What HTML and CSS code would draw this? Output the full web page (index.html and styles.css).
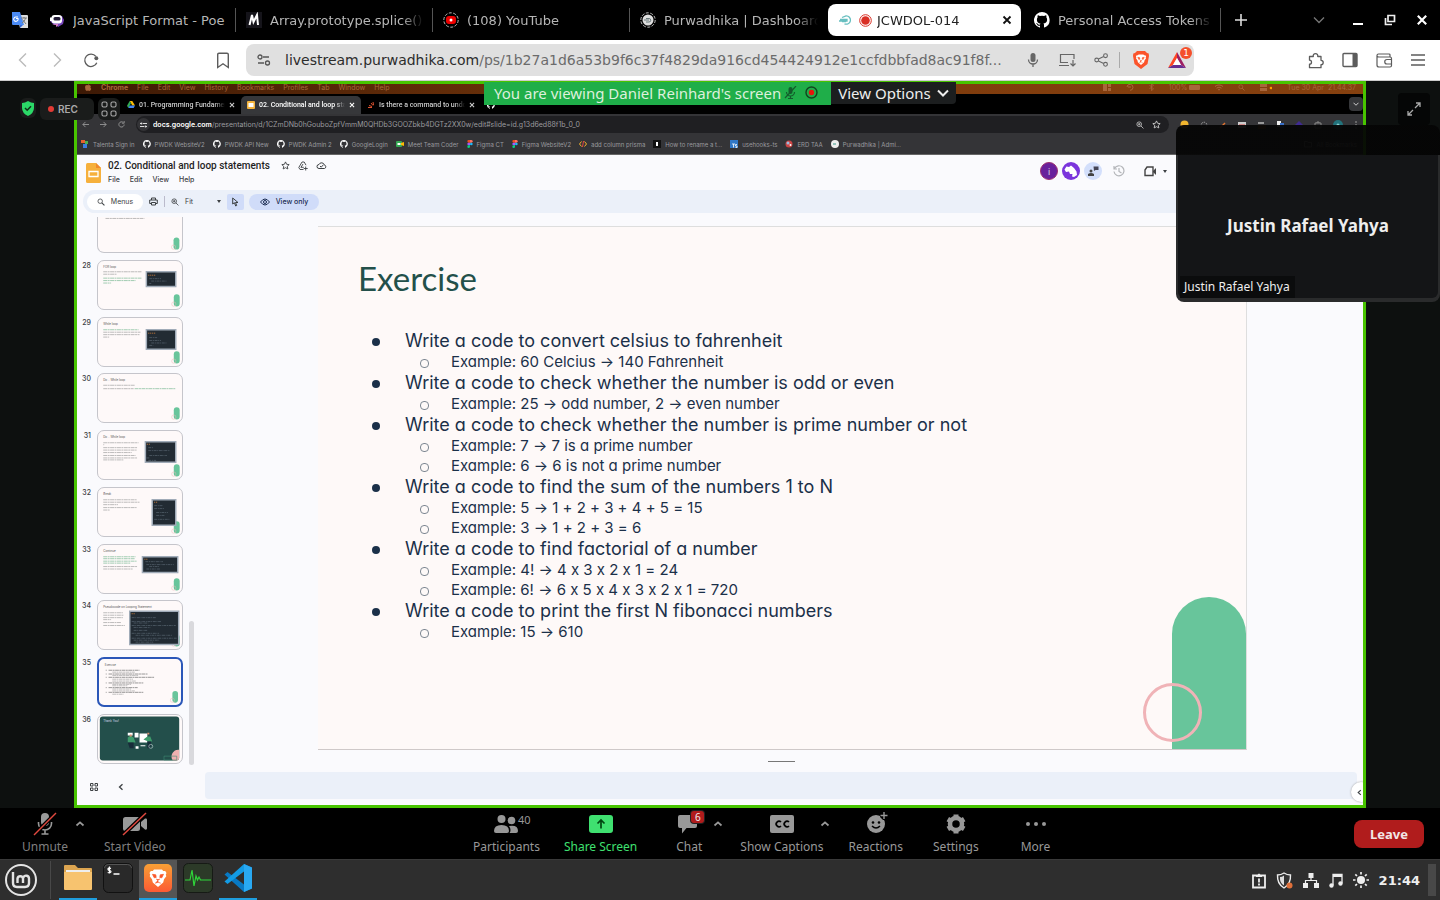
FILE: index.html
```html
<!DOCTYPE html>
<html lang="en">
<head>
<meta charset="utf-8">
<title>JCWDOL-014</title>
<link rel="stylesheet" href="styles.css">
</head>
<body>
<svg class="defs" aria-hidden="true">
  <symbol id="github" viewBox="0 0 16 16"><path fill="currentColor" d="M8 0a8 8 0 0 0-2.5 15.6c.4 0 .5-.2.5-.4v-1.500c-2.200.5-2.700-1-2.700-1-.4-.9-.9-1.200-.9-1.200-.7-.5.1-.5.1-.5.8.1 1.200.8 1.200.8.7 1.300 1.900.9 2.300.7.1-.5.3-.9.5-1.100-1.800-.2-3.600-.9-3.600-4 0-.9.3-1.600.8-2.100-.1-.2-.4-1 .1-2.100 0 0 .7-.2 2.200.8a7.600 7.600 0 0 1 4 0c1.500-1 2.200-.8 2.200-.8.4 1.100.2 1.900.1 2.100.5.6.8 1.300.8 2.100 0 3.100-1.900 3.700-3.700 3.900.3.3.6.8.6 1.500v2.200c0 .2.100.5.6.4A8 8 0 0 0 8 0z"/></symbol>
  <symbol id="x" viewBox="0 0 10 10"><path d="M1.500 1.500l7 7M8.500 1.500l-7 7" stroke="currentColor" stroke-width="1.800" fill="none"/></symbol>
  <symbol id="up" viewBox="0 0 10 10"><path d="M1.500 6.500L5 3.300l3.500 3.200" stroke="currentColor" stroke-width="1.700" fill="none"/></symbol>
  <symbol id="down" viewBox="0 0 12 12"><path d="M1 3.500l5 5 5-5" stroke="currentColor" stroke-width="2" fill="none"/></symbol>
  <symbol id="left" viewBox="0 0 16 16"><path d="M11 1.500L4.500 8l6.500 6.500" stroke="currentColor" stroke-width="1.400" fill="none"/></symbol>
  <symbol id="leftbold" viewBox="0 0 16 16"><path d="M11 2.500L5 8l6 5.500" stroke="currentColor" stroke-width="2.600" fill="none"/></symbol>
  <symbol id="right" viewBox="0 0 16 16"><path d="M5 1.500L11.500 8 5 14.500" stroke="currentColor" stroke-width="1.400" fill="none"/></symbol>
  <symbol id="search" viewBox="0 0 10 10"><g fill="none" stroke="currentColor"><circle cx="4" cy="4" r="2.800"/><path d="M6 6l3.300 3.300" stroke-width="1.300"/></g></symbol>
  <symbol id="zoomin" viewBox="0 0 10 10"><g fill="none" stroke="currentColor"><circle cx="4" cy="4" r="2.900"/><path d="M6 6l3.300 3.300M2.500 4h3M4 2.500v3"/></g></symbol>
  <symbol id="star" viewBox="0 0 12 12"><path d="M6 1.200l1.500 3.200 3.400.4-2.500 2.300.7 3.500L6 8.900l-3.100 1.700.7-3.500L1.100 4.800l3.400-.4z" stroke="currentColor" stroke-width="1.200" fill="none"/></symbol>
  <symbol id="figma" viewBox="0 0 6 9"><path fill="#f24e1e" d="M0 1.500A1.500 1.500 0 0 1 1.500 0H3v3H1.500A1.500 1.500 0 0 1 0 1.500z"/><path fill="#ff7262" d="M3 0h1.500a1.500 1.500 0 0 1 0 3H3z"/><path fill="#a259ff" d="M0 4.500A1.500 1.500 0 0 1 1.500 3H3v3H1.500A1.500 1.500 0 0 1 0 4.500z"/><circle cx="4.500" cy="4.500" r="1.500" fill="#1abcfe"/><path fill="#0acf83" d="M0 7.500A1.500 1.500 0 0 1 1.500 6H3v1.500a1.500 1.500 0 0 1-3 0z"/></symbol>
  <symbol id="lion" viewBox="0 0 20 20"><path fill="#fff" d="M6 1.500h8l1.200 1.600 2-.2 1.300 2-.7 1.600.5 1.800-2.300 3-.8 3.200L10 19l-5.200-4.500L4 11.300l-2.300-3 .5-1.800-.7-1.600 1.300-2 2 .2z"/><path d="M4.500 6.300l3.300.5.4 2.700-2 .3zM15.500 6.300l-3.300.5-.4 2.700 2 .3zM8 11l2 .8 2-.8M10 11.800v2.400l-2.800 1M10 14.200l2.800 1" fill="#f9572a" stroke="#f9572a" stroke-width=".7"/></symbol>
  <symbol id="corner" viewBox="0 0 10 15"><rect x="3" y="1" width="6" height="12.500" rx="3" fill="#68c59b"/><circle cx="3" cy="11" r="2.200" fill="none" stroke="#eeb9b9" stroke-width=".5"/></symbol>
</svg>

<header class="tabs">
  <button class="pinned" aria-label="Translate"><svg width="18" height="18" viewBox="0 0 18 18"><path d="M6 4h10a1 1 0 0 1 1 1v12H9z" fill="#ddd"/><path d="M1 1h8l4 13H2a1 1 0 0 1-1-1z" fill="#4a8af4"/><path d="M7 6H4.800A2.200 2.200 0 1 0 7 7.500H5" fill="none" stroke="#fff" stroke-width="1.100"/><path d="M10 7h6M13 6v1M11 12c2-1 3-3 3.500-5M11.500 8.500L15 13" stroke="#777" fill="none"/><path d="M9 14h3l-3 3z" fill="#3367d6"/></svg></button>
  <nav class="tablist">
    <a class="tab" href="#"><svg width="16" height="16" viewBox="0 0 16 16"><path d="M4 4h9l2 4-1 4-5 3-2-2H5L1 9z" fill="#7544bb"/><path d="M3 12h6v1.500l-2 1.500v-2z" fill="#d57cbd"/><rect x="2.500" y="3" width="10.500" height="8.500" rx="3" fill="#fff"/><rect x="4.500" y="5" width="7" height="3.500" rx="1.500" fill="#221b35"/><path d="M1 5.500h2v3.500H1z" fill="#fff"/></svg><span>JavaScript Format - Poe</span></a>
    <a class="tab" href="#"><svg width="16" height="16" viewBox="0 0 16 16"><path fill="#15141a" d="M0 0h16v16H0z"/><path d="M3.500 13L6 3l1.500 7L11 3l1 10" fill="none" stroke="#fff" stroke-width="2"/></svg><span>Array.prototype.splice()</span></a>
    <a class="tab" href="#"><svg width="16" height="16" viewBox="0 0 16 16"><circle cx="8" cy="8" r="7.200" fill="none" stroke="#bbb" stroke-dasharray="3 1.500"/><rect x="3" y="4" width="10" height="8" rx="3" fill="#e00"/><circle cx="8" cy="8" r="1.500" fill="#fff"/></svg><span>(108) YouTube</span></a>
    <a class="tab" href="#"><svg width="16" height="16" viewBox="0 0 16 16"><circle cx="8" cy="8" r="7.200" fill="none" stroke="#bbb" stroke-dasharray="3 1.500"/><circle cx="8" cy="8" r="5.500" fill="#ddd"/><path d="M4 8h5M6 6.500h3a1.500 1.500 0 0 1 0 3.500H6" stroke="#6a7a7c" fill="none"/></svg><span>Purwadhika | Dashboard</span></a>
    <a class="tab current" href="#"><svg width="13" height="12" viewBox="0 0 13 12"><path d="M3 3.500L7 1.800a4.200 4.200 0 1 1-1.500 8M1 5.500h7v1.500H0M3 7.500h4" stroke="#67bfc0" stroke-width="1.300" fill="none"/></svg><svg width="13" height="13" viewBox="0 0 13 13"><circle cx="6.500" cy="6.500" r="5.800" fill="none" stroke="#d93025"/><circle cx="6.500" cy="6.500" r="4.300" fill="#d93025"/></svg><span>JCWDOL-014</span><svg class="tabx" width="10" height="10"><use href="#x"/></svg></a>
    <a class="tab" href="#"><svg class="white" width="16" height="16"><use href="#github"/></svg><span>Personal Access Tokens</span></a>
  </nav>
  <div class="winctl">
    <button aria-label="New tab"><svg width="12" height="12" viewBox="0 0 12 12"><path d="M6 0v12M0 6h12" stroke="#ddd" stroke-width="1.600"/></svg></button>
    <button class="tabmenu" aria-label="Search tabs"><svg width="12" height="12" viewBox="0 0 12 12"><path d="M1 3.500l5 5 5-5" stroke="#777" stroke-width="1.300" fill="none"/></svg></button>
    <button aria-label="Minimise"><svg width="12" height="12" viewBox="0 0 12 12"><path d="M1 10h10" stroke="#fff" stroke-width="2"/></svg></button>
    <button aria-label="Restore"><svg width="12" height="12" viewBox="0 0 12 12"><path d="M4 1.500h6.500v6H4zM1.500 4v6.500H8" fill="none" stroke="#eee" stroke-width="1.700"/></svg></button>
    <button aria-label="Close"><svg class="white" width="12" height="12"><use href="#x"/></svg></button>
  </div>
</header>

<div class="toolbar">
  <div class="navbtns">
    <button class="off" aria-label="Back"><svg width="16" height="16"><use href="#left"/></svg></button>
    <button class="off" aria-label="Forward"><svg width="16" height="16"><use href="#right"/></svg></button>
    <button aria-label="Reload"><svg width="16" height="16" viewBox="0 0 18 18"><path d="M14.500 5A7 7 0 1 0 15.500 12" stroke="currentColor" stroke-width="1.500" fill="none"/><circle cx="15" cy="7" r="2.200" fill="currentColor"/></svg></button>
    <button class="mark" aria-label="Bookmark"><svg width="14" height="17" viewBox="0 0 14 17"><path d="M1.700 2.500q0-1.300 1.300-1.300h8q1.300 0 1.300 1.300v13L7 11.800 1.700 15.500z" stroke="currentColor" stroke-width="1.400" fill="none"/></svg></button>
  </div>
  <div class="omnibox">
    <svg width="14" height="14" viewBox="0 0 14 14"><g fill="none" stroke="#555" stroke-width="1.300"><circle cx="3" cy="4" r="2"/><path d="M6 4h6M1 10h6"/><circle cx="10.500" cy="10" r="2"/></g></svg>
    <div class="url" role="textbox" aria-label="Address">livestream.purwadhika.com<span>/ps/1b27a1d6a53b9f6c37f4829da916cd454424912e1ccfdbbfad8ac91f8f...</span></div>
    <button aria-label="Microphone"><svg width="14" height="16" viewBox="0 0 14 16"><rect x="4.500" y="1" width="5" height="9" rx="2.500" fill="#666"/><path d="M2.500 7.500a4.500 4.500 0 0 0 9 0M7 12v3" fill="none" stroke="#666" stroke-width="1.300"/></svg></button>
    <button aria-label="Install"><svg width="18" height="14" viewBox="0 0 18 14"><path d="M16 6V1.500H2.500v8H10M1 12.500h10M15 7v6M12.500 10.500L15 13l2.500-2.500" fill="none" stroke="#666" stroke-width="1.200"/></svg></button>
    <button aria-label="Share"><svg width="15" height="14" viewBox="0 0 15 14"><g fill="none" stroke="#666" stroke-width="1.100"><circle cx="2.700" cy="7" r="1.900"/><circle cx="11.500" cy="2.700" r="1.900"/><circle cx="11.500" cy="11.300" r="1.900"/><path d="M4.500 6L9.700 3.500M4.500 8l5.200 2.500"/></g></svg></button>
    <i class="vline"></i>
    <button aria-label="Brave Shields"><svg width="18" height="20" viewBox="0 0 18 20"><path d="M5 1h8l2 2 1.700.5L17 6l-1.500 8L9 19l-6.500-5L1 6l.3-2.500L3 3z" fill="#fb542b"/><svg x="3" y="3" width="12" height="13"><use href="#lion"/></svg></svg></button>
    <button class="rewards" aria-label="Rewards"><svg width="20" height="17" viewBox="0 0 20 17"><path d="M9 0L0 16l5-3 4-7z" fill="#ff4724"/><path d="M9 0l9 16-5-3-4-7z" fill="#9e1f63"/><path d="M0 16h18l-5-3H5z" fill="#662d91"/><path d="M9 6l4 7H5z" fill="#fff"/></svg><b>1</b></button>
  </div>
  <div class="exts">
    <button aria-label="Extensions"><svg width="16" height="17" viewBox="0 0 16 17"><path d="M1.500 4.500h3.800a2.300 2.300 0 1 1 4.400 0h3.300v3.800a2.200 2.200 0 1 1 0 4.400v3H1.500v-3.500a2 2 0 1 0 0-4z" fill="none" stroke="currentColor" stroke-width="1.300" stroke-linejoin="round"/></svg></button>
    <button aria-label="Sidebar"><svg width="16" height="16" viewBox="0 0 16 16"><rect x="1" y="1.500" width="14" height="13" rx="1" fill="none" stroke="currentColor" stroke-width="1.400"/><path d="M10.500 2H15v12h-4.500z" fill="currentColor"/></svg></button>
    <button aria-label="Wallet"><svg width="17" height="15" viewBox="0 0 17 15"><path d="M14 4V2q0-1-1-1H2.500A1.500 1.500 0 0 0 1 2.500V12q0 2 2 2h11q1.500 0 1.500-1.500v-7Q15.500 4 14 4H3Q1.500 4 1 3M15.500 6.500H11a2.200 2.200 0 0 0 0 4.500h4.500" fill="none" stroke="currentColor" stroke-width="1.200"/></svg></button>
    <button aria-label="Menu"><svg width="14" height="12" viewBox="0 0 14 12"><path d="M0 1h14M0 6h14M0 11h14" stroke="currentColor" stroke-width="1.300"/></svg></button>
  </div>
</div>

<main class="meeting">
  <section class="shared">
    <div class="macbar">
      <svg width="8" height="8" viewBox="0 0 8 8"><path d="M5.500 0Q4 .6 4.200 1.800 5.500 1.500 5.500 0zM1 4q0-2 2-2l1 .3L5.200 2 7 3q-1.300 1.500.3 3Q6.300 8 5.300 8L4 7.600 2.800 8Q1 7 1 4z" fill="currentColor"/></svg>
      <b>Chrome</b><span>File</span><span>Edit</span><span>View</span><span>History</span><span>Bookmarks</span><span>Profiles</span><span>Tab</span><span>Window</span><span>Help</span>
      <div class="macright">
        <svg width="8" height="7" viewBox="0 0 8 7"><path d="M0 0h4v7H0zM5 0h3v3H5zM5 4h3v3H5z" fill="currentColor"/></svg>
        <svg width="8" height="8" viewBox="0 0 8 8"><path d="M1 4a3 3 0 1 1 3 3.300M2 4h3" fill="none" stroke="currentColor"/></svg>
        <svg width="5" height="8" viewBox="0 0 5 8"><path d="M.5 2l4 4-2 1.500v-7l2 1.500-4 4" fill="none" stroke="currentColor" stroke-width=".8"/></svg>
        <span>100% <i class="batt"></i></span>
        <svg width="8" height="7" viewBox="0 0 8 7"><path d="M0 2.500a6 6 0 0 1 8 0M1.500 4.200a3.800 3.800 0 0 1 5 0M3 5.700h2" fill="none" stroke="currentColor"/></svg>
        <svg width="7" height="7"><use href="#search"/></svg>
        <svg width="12" height="7" viewBox="0 0 12 7"><path d="M0 0h7v3H0zM0 4h7v3H0z" fill="currentColor"/><circle cx="11" cy="4" r="1.300" fill="#f90"/></svg>
        <span>Tue 30 Apr&nbsp; 21.44.37</span>
      </div>
    </div>
    <div class="mactabs">
      <div class="mactab"><svg width="8" height="7" viewBox="0 0 8 7"><path d="M2.700 0h2.600L8 4.500H5.300z" fill="#fbbc04"/><path d="M2.700 0L0 4.700 1.300 7 4 2.300z" fill="#34a853"/><path d="M2.700 4.500H8L6.700 7H1.300z" fill="#4285f4"/></svg><span>01. Programming Fundament</span><svg class="mx" width="6" height="6"><use href="#x"/></svg></div>
      <div class="mactab on"><svg width="8" height="8" viewBox="0 0 8 8"><rect width="8" height="8" rx="1" fill="#f4b33c"/><path d="M1.500 2h5v4h-5z" fill="#fff"/></svg><span>02. Conditional and loop stat</span><svg class="mx" width="6" height="6"><use href="#x"/></svg></div>
      <div class="mactab"><svg width="8" height="8" viewBox="0 0 8 8"><path d="M1 6.500h4M2 4.500l3 1M4 2l2 2.500M6 1l.5 3" stroke="#e0532f" fill="none"/></svg><span>Is there a command to undo g</span><svg class="mx" width="6" height="6"><use href="#x"/></svg></div>
      <div class="mactab"><svg class="white" width="8" height="8"><use href="#github"/></svg></div>
      <button class="mtdown" aria-label="Tabs"><svg width="6" height="6"><use href="#down"/></svg></button>
    </div>
    <div class="macaddr">
      <svg width="7" height="7" viewBox="0 0 8 8"><path d="M8 4H1M4 1L1 4l3 3" fill="none" stroke="#999"/></svg>
      <svg width="7" height="7" viewBox="0 0 8 8"><path d="M0 4h7M4 1l3 3-3 3" fill="none" stroke="#999"/></svg>
      <svg width="7" height="7" viewBox="0 0 8 8"><path d="M7 4a3 3 0 1 1-1-2.300M7 0v2.500H4.500" fill="none" stroke="#999"/></svg>
      <div class="macurl"><i><svg width="7" height="6" viewBox="0 0 14 12"><path d="M6 3h8M0 9h8M0 3h3M11 9h3" stroke="#ddd" stroke-width="2"/><circle cx="3" cy="3" r="2" fill="#ddd"/><circle cx="11" cy="9" r="2" fill="#ddd"/></svg></i><div><b>docs.google.com</b>/presentation/d/1CZmDNb0hGouboZpfVmmM0QHDb3GOOZbkb4DGTz2XX0w/edit#slide=id.g13d6ed88f1b_0_0</div><svg width="8" height="8"><use href="#zoomin"/></svg><svg width="9" height="9"><use href="#star"/></svg></div>
      <div class="macext">
        <svg width="9" height="9" viewBox="0 0 9 9"><circle cx="4.500" cy="4.500" r="4" fill="#f2b62f"/><path d="M2 6h5" stroke="#c33"/></svg>
        <svg width="8" height="8" viewBox="0 0 8 8"><circle cx="4" cy="4" r="2.800" fill="none" stroke="#aaa" stroke-dasharray="1.500 1"/></svg>
        <svg width="8" height="8" viewBox="0 0 8 8"><path d="M1 7l5-5" stroke="#e6742e" stroke-width="1.500"/></svg>
        <svg width="8" height="8" viewBox="0 0 8 8"><path d="M0 1h8v6H0z" fill="#ccc"/><path d="M1 4h6" stroke="#d44"/></svg>
        <svg width="9" height="9" viewBox="0 0 9 9"><path d="M1 2h6v2H1z" fill="#999"/><path d="M1 5h8v4H1z" fill="#8a4a12"/></svg>
        <svg width="8" height="8" viewBox="0 0 8 8"><path d="M1 0h4v6H1z" fill="#eee"/><path d="M4 2h4v5H4z" fill="#3a70c8"/></svg>
        <svg width="8" height="8" viewBox="0 0 8 8"><path d="M4 0l4 4-4 4-4-4z" fill="#3f2a92"/></svg>
        <svg width="8" height="8" viewBox="0 0 8 8"><path d="M1 2h6v5H1zM3 2V1h2v1" fill="none" stroke="#888"/></svg>
        <svg width="10" height="10" viewBox="0 0 10 10"><circle cx="5" cy="5" r="5" fill="#22737c"/><circle cx="5" cy="5" r="1.500" fill="#8cc"/></svg>
        <svg width="4" height="8" viewBox="0 0 4 8"><path d="M2 0v2M2 3v2M2 6v2" stroke="#999"/></svg>
      </div>
    </div>
    <div class="marks">
      <span><svg width="8" height="8" viewBox="0 0 8 8"><path d="M0 0h4v3H0z" fill="#e8612e"/><path d="M4 1h3v3H4z" fill="#4caf50"/><path d="M2 4h4v4H2z" fill="#3c7de0"/></svg>Talenta Sign in</span>
      <span><svg class="white" width="8" height="8"><use href="#github"/></svg>PWDK WebsiteV2</span>
      <span><svg class="white" width="8" height="8"><use href="#github"/></svg>PWDK API New</span>
      <span><svg class="white" width="8" height="8"><use href="#github"/></svg>PWDK Admin 2</span>
      <span><svg class="white" width="8" height="8"><use href="#github"/></svg>GoogleLogin</span>
      <span><svg width="8" height="8" viewBox="0 0 8 8"><rect y="1" width="6" height="6" rx="1" fill="#34a853"/><path d="M5 3l3-1v4L5 5z" fill="#fbbc04"/><path d="M1.500 3h3v2h-3z" fill="#fff"/></svg>Meet Team Coder</span>
      <span><svg width="6" height="8"><use href="#figma"/></svg>Figma CT</span>
      <span><svg width="6" height="8"><use href="#figma"/></svg>Figma WebsiteV2</span>
      <span><svg width="8" height="8" viewBox="0 0 8 8"><path d="M2.500 1.500L.5 4l2 2.500M5.500 1.500L7.500 4l-2 2.500" fill="none" stroke="#f5b42c"/><path d="M4.500 1l-1 6" stroke="#e64545"/></svg>add column prisma</span>
      <span><svg width="8" height="8" viewBox="0 0 8 8"><path fill="#111" d="M0 0h8v8H0z"/><path fill="#fff" d="M3 2h2v4H3z"/></svg>How to rename a t...</span>
      <span><svg width="8" height="8" viewBox="0 0 8 8"><path fill="#3178c6" d="M0 0h8v8H0z"/><path d="M2 4h3M3.500 4v3.500M7 4.500H5.500V6H7v1.500H5.500" stroke="#fff" stroke-width=".8" fill="none"/></svg>usehooks-ts</span>
      <span><svg width="8" height="8" viewBox="0 0 8 8"><circle cx="4" cy="4" r="3.500" fill="#c44"/><circle cx="3" cy="3" r="1.500" fill="#9bd"/><circle cx="5.500" cy="5" r="1" fill="#fff"/></svg>ERD TAA</span>
      <span><svg width="8" height="8" viewBox="0 0 8 8"><circle cx="4" cy="4" r="4" fill="#eee"/><path d="M2 4h3" stroke="#3a9a8a"/></svg>Purwadhika | Admi...</span>
      <span class="allmarks"><svg width="8" height="8" viewBox="0 0 8 8"><path d="M.5 1.500h3l.7 1h3.300v4.500h-7z" fill="none" stroke="#888"/></svg>All Bookmarks</span>
    </div>

    <div class="dochead">
      <svg width="15" height="20" viewBox="0 0 15 20"><path d="M1.500 0h8.500l5 5v13.500q0 1.500-1.500 1.500h-12Q0 20 0 18.500v-17Q0 0 1.500 0z" fill="#f6b03c"/><path d="M10 0l5 5h-5z" fill="#f08a2c"/><path d="M3 8.500h9v5H3z" fill="none" stroke="#fff" stroke-width="1.300"/></svg>
      <div class="doctitle">
        <div class="docname"><h1>02. Conditional and loop statements</h1>
          <svg width="9" height="9"><use href="#star"/></svg>
          <svg width="10" height="10" viewBox="0 0 10 10"><path d="M5.500 8.500H2L.8 6.500 4 1h2.200L8 4.200M2.800 6.300h3M5 3L3 6.300M7.700 5.500v4M5.700 7.500h4" fill="none" stroke="currentColor" stroke-width=".9"/></svg>
          <svg width="11" height="9" viewBox="0 0 11 9"><path d="M3 7.500a2 2 0 0 1 0-4 2.800 2.800 0 0 1 5.300.5 1.800 1.800 0 0 1 .2 3.500zM4 5l1.200 1.200L7.200 4" fill="none" stroke="currentColor"/></svg>
        </div>
        <nav><span>File</span><span>Edit</span><span>View</span><span>Help</span></nav>
      </div>
      <div class="people">
        <span class="av av1">i</span>
        <span class="av av2"><svg width="18" height="18" viewBox="0 0 18 18"><path d="M2.500 7.500L4.500 4.500 7 5l2-1.500L12 6l2.500 3.500L15 13l-3 2-2-.5.5-2.500H8l-1-2.500-3 .5z" fill="#fff"/></svg></span>
        <span class="av av3"><svg width="11" height="10" viewBox="0 0 11 10"><path d="M0 10V8q3-2 6 0v2z" fill="#444"/><circle cx="3" cy="5" r="1.500" fill="#444"/><path d="M5.500.5h5v3.500h-3L6 5z" fill="#445"/></svg></span>
        <svg width="12" height="12" viewBox="0 0 12 12"><path d="M1.500 3.500A5 5 0 1 1 1 6.500M1 1v3h3M6 3v3.500l2.500 1.500" fill="none" stroke="#b3b5b9" stroke-width="1.200"/></svg>
        <span class="cam"><svg width="13" height="11" viewBox="0 0 13 11"><path d="M1 4l2-3h6v8.500H1z" fill="none" stroke="#444" stroke-width="1.400"/><path d="M9 5l3-3v7L9 6z" fill="#444"/></svg><i class="caret"></i></span>
      </div>
    </div>

    <div class="doctools">
      <button class="menus"><svg width="8" height="8"><use href="#search"/></svg>Menus</button>
      <button aria-label="Print"><svg width="9" height="9" viewBox="0 0 9 9"><path d="M2.500 3V1h4v2M2.500 6.500H.7V3h7.600v3.500H6.500M2.500 5.500h4V8h-4z" fill="none" stroke="currentColor"/></svg></button>
      <i class="tvline"></i>
      <button aria-label="Zoom"><svg width="8" height="8"><use href="#zoomin"/></svg></button>
      <button class="fit">Fit<i class="caret"></i></button>
      <button class="pointer" aria-label="Select"><svg width="7" height="10" viewBox="0 0 7 10"><path d="M.7 1v6l1.700-1.300L3.700 9l1-.5-1.200-3H6z" fill="none" stroke="currentColor"/></svg></button>
      <button class="viewonly"><svg width="10" height="8" viewBox="0 0 10 8"><path d="M.5 4Q5-2 9.500 4 5 10 .5 4z" fill="none" stroke="currentColor"/><circle cx="5" cy="4" r="1.500" fill="none" stroke="currentColor"/></svg>View only</button>
    </div>

    <div class="editor">
      <aside class="film">
        <ol class="thumbs">
          <li class="cut"><span></span><div class="thumb"><svg viewBox="0 0 85 36"><path class="ln" d="M7 1.500h40"/><use href="#corner" x="74" y="20" width="10" height="15"/></svg></div></li>
          <li><span>28</span><div class="thumb"><svg viewBox="0 0 85 49"><text x="5" y="7">FOR loop</text><path class="ln" d="M5 11h39M5 13.500h14"/><path class="ln g" d="M5 17.500h39M5 20h33M5 22.500h8"/><path class="code" d="M49 11h30v15H49z"/><path class="lights" d="M51 14.500h7"/><path class="cl" d="M52 18h12M54 20.500h16M52 23h2"/><use href="#corner" x="74" y="33" width="10" height="15"/></svg></div></li>
          <li><span>29</span><div class="thumb"><svg viewBox="0 0 85 49"><text x="5" y="7">While loop</text><path class="ln g" d="M5 12h36"/><path class="ln" d="M5 14.500h38M5 17h37M5 19.500h6"/><path class="code" d="M49 12h30v20H49z"/><path class="lights" d="M51 15.500h7"/><path class="cl" d="M52 20h8M52 23h12M54 25.500h16M52 28h4"/><use href="#corner" x="74" y="33" width="10" height="15"/></svg></div></li>
          <li><span>30</span><div class="thumb"><svg viewBox="0 0 85 49"><text x="5" y="7">Do .. While loop</text><path class="ln" d="M5 11.500h32M5 15h31"/><path class="ln g" d="M37 15h42"/><use href="#corner" x="74" y="33" width="10" height="15"/></svg></div></li>
          <li><span>31</span><div class="thumb"><svg viewBox="0 0 85 49"><text x="5" y="7">Do .. While loop</text><path class="ln" d="M5 12h36M5 14h1M5 17h35M5 19.500h34M5 22h29M5 25h33M5 27.500h35M5 29.500h21"/><path class="code" d="M48 11h31v21H48z"/><path class="lights" d="M49.500 13.500h4"/><path class="cl" d="M51 17h5M51 20h22M52 25h18M49 27.500h3M51 30h8"/><use href="#corner" x="74" y="33" width="10" height="15"/></svg></div></li>
          <li><span>32</span><div class="thumb"><svg viewBox="0 0 85 49"><text x="5" y="7">Break</text><path class="ln" d="M5 12h34M5 14.500h37M5 17h15M5 20h34M5 22.500h7"/><use href="#corner" x="74" y="33" width="10" height="15"/><path class="code" d="M55 12h24v26H55z"/><path class="lights" d="M57 14.500h4"/><path class="cl" d="M57 18h9M57 21h10M59 25h12M59 28h9M57 32h16"/></svg></div></li>
          <li><span>33</span><div class="thumb"><svg viewBox="0 0 85 49"><text x="5" y="7">Continue</text><path class="ln g" d="M5 12h33M5 14h32M5 16.500h34M5 18.500h28"/><path class="ln" d="M5 22h35M5 24.500h30"/><path class="code" d="M45 12h36v16H45z"/><path class="lights" d="M47 14.500h4"/><path class="cl" d="M48 17h18M49 20h28M52 22h10M49 24.500h14"/><use href="#corner" x="74" y="33" width="10" height="15"/></svg></div></li>
          <li><span>34</span><div class="thumb"><svg viewBox="0 0 85 49"><text x="5" y="7">Pseudocode on Looping Statement</text><path class="ln" d="M5 12h20M5 14.500h21M5 17h20M5 19h8M5 22h18M5 25h22"/><use href="#corner" x="74" y="33" width="10" height="15"/><path class="code" d="M32 10.500h50v34H32z"/><path class="lights" d="M34 13h4"/><path class="cl" d="M34 17h25M34 21h30M36 22.500h15M34 25h45M36 27h17M36 30h14M34 33h28M38 35h37M34 38h46M36 40h26M38 42h18"/></svg></div></li>
          <li class="active"><span>35</span><div class="thumb"><svg viewBox="0 0 85 49"><text x="5" y="7">Exercise</text><path class="ln d" d="M6 12h1M9 12h33M6 16h1M9 16h42M6 19.500h1M9 19.500h49M6 25.500h1M9 25.500h37M6 30.500h1M9 30.500h31M6 35.500h1M9 35.500h37"/><path class="ln" d="M13 14h24M13 17.500h28M13 21.500h22M13 23.500h25M13 27h20M13 28.500h16M13 32h20M13 34h24M13 37.500h12"/><use href="#corner" x="74" y="33" width="10" height="15"/></svg></div></li>
          <li><span>36</span><div class="thumb"><svg viewBox="0 0 85 49"><rect x="1.500" y="1.500" width="81" height="45" rx="3" fill="#234f4b"/><text class="light" x="5" y="7">Thank You!</text><path d="M76 46.500a7 7 0 0 1 6.500-11V44q0 2.500-2.500 2.500z" fill="#f0b0b0"/><path d="M67 42h13v4H67z" fill="none" stroke="#3f8a72" stroke-width=".6"/><path d="M42 19h8v9h-8zM37 18h4v5h-4zM30 18h5v3h-5zM38 32h3v2.500h-3zM43 31h5v1h-5z" fill="#fff"/><path d="M30 23l3-2 3 2 2 5h-8zM50 22h3l2 5h-4l-5-2z" fill="#3e9b6c"/><path d="M30 28h6v6h-4zM50 27h4l-1 7h-3z" fill="#182c3a"/><path d="M50 18h2v2h-2zM32 20h2v2h-2z" fill="#d89070"/><circle cx="53.500" cy="32" r="2" fill="none" stroke="#cdd" stroke-width=".6"/></svg></div></li>
        </ol>
        <div class="filmfoot">
          <button aria-label="Grid view"><svg width="8" height="8" viewBox="0 0 8 8"><path d="M.5.500h2.500V3H.5zM5 .5h2.500V3H5zM.5 5h2.500v2.500H.5zM5 5h2.500v2.500H5z" fill="none" stroke="currentColor"/></svg></button>
          <button aria-label="Hide filmstrip"><svg width="8" height="8"><use href="#leftbold"/></svg></button>
        </div>
      </aside>
      <div class="scroll"><i></i></div>
      <div class="stage">
        <article class="slide">
          <h2>Exercise</h2>
          <ul>
            <li>Write a code to convert celsius to fahrenheit<ul><li>Example: 60 Celcius → 140 Fahrenheit</li></ul></li>
            <li>Write a code to check whether the number is odd or even<ul><li>Example: 25 → odd number, 2 → even number</li></ul></li>
            <li>Write a code to check whether the number is prime number or not<ul><li>Example: 7 → 7 is a prime number</li><li>Example: 6 → 6 is not a prime number</li></ul></li>
            <li>Write a code to find the sum of the numbers 1 to N<ul><li>Example: 5 → 1 + 2 + 3 + 4 + 5 = 15</li><li>Example: 3 → 1 + 2 + 3 = 6</li></ul></li>
            <li>Write a code to find factorial of a number<ul><li>Example: 4! → 4 x 3 x 2 x 1 = 24</li><li>Example: 6! → 6 x 5 x 4 x 3 x 2 x 1 = 720</li></ul></li>
            <li>Write a code to print the first N fibonacci numbers<ul><li>Example: 15 → 610</li></ul></li>
          </ul>
          <i class="pillar"></i><i class="ring"></i>
        </article>
        <div class="grip"><i></i></div>
        <div class="notes"></div>
        <button class="expand" aria-label="Open side panel"><svg width="7" height="7"><use href="#leftbold"/></svg></button>
      </div>
    </div>
  </section>

  <div class="badges">
    <span class="shield"><svg width="14" height="15" viewBox="0 0 14 15"><path d="M7 0q3 2 6 2v5q0 5-6 8-6-3-6-8V2q3 0 6-2z" fill="#2bd968"/><path d="M4 7l2.200 2.200L10 5.300" fill="none" stroke="#103018" stroke-width="1.500"/></svg></span>
    <span class="rec"><i></i>REC</span>
    <button class="gridbtn" aria-label="Layout"><svg width="16" height="16" viewBox="0 0 16 16"><g fill="none" stroke="#aaa" stroke-width="1.100"><rect x="1" y="1" width="5" height="5" rx="1.500"/><rect x="10" y="1" width="5" height="5" rx="1.500"/><rect x="1" y="10" width="5" height="5" rx="1.500"/><rect x="10" y="10" width="5" height="5" rx="1.500"/></g></svg></button>
  </div>
  <div class="banner">
    <div class="viewing">You are viewing Daniel Reinhard's screen
      <svg class="bmic" width="13" height="13" viewBox="0 0 13 13"><rect x="4.500" y="1" width="4" height="7" rx="2" fill="#145c2c"/><path d="M2.500 6a4 4 0 0 0 8 0M6.500 10v2.500M4 12.500h5M1 12L12 0" fill="none" stroke="#145c2c" stroke-width="1.200"/></svg>
      <svg width="13" height="13" viewBox="0 0 13 13"><circle cx="6.500" cy="6.500" r="5.500" fill="none" stroke="#12451f" stroke-width="1.400"/><circle cx="6.500" cy="6.500" r="2.700" fill="#e8160c"/></svg>
    </div>
    <button class="options">View Options<svg width="12" height="12"><use href="#down"/></svg></button>
  </div>
  <button class="full" aria-label="Full screen"><svg width="14" height="14" viewBox="0 0 14 14"><path d="M8 6l5-5M9 1h4v4M6 8l-5 5M1 9v4h4" fill="none" stroke="#aaa" stroke-width="1.300"/></svg></button>
  <aside class="speaker">
    <div class="speakerbody"><strong>Justin Rafael Yahya</strong><span>Justin Rafael Yahya</span></div>
  </aside>
</main>

<footer class="controls">
  <div class="cleft">
    <button class="ctl dim"><svg width="24" height="24" viewBox="0 0 24 24"><rect x="8" y="1" width="8" height="13" rx="4" fill="currentColor"/><path d="M5.500 10v1.500a6.500 6.500 0 0 0 13 0V10M12 18v3.500M8.500 22h7" fill="none" stroke="currentColor" stroke-width="1.600"/><path d="M1 23L23 1" stroke="#000" stroke-width="4"/><path d="M1 23L23 1" stroke="#e0483f" stroke-width="1.500"/></svg>Unmute</button>
    <button class="chev" aria-label="Audio options"><svg width="10" height="10"><use href="#up"/></svg></button>
    <button class="ctl dim video"><svg width="26" height="24" viewBox="0 0 26 24"><rect x="1" y="5" width="17" height="14" rx="2.500" fill="currentColor"/><path d="M19 10l4-3.500q2-.5 2 1v9q0 1.500-2 1L19 14z" fill="currentColor"/><path d="M1 23L24 1" stroke="#000" stroke-width="4"/><path d="M1 23L24 1" stroke="#e0483f" stroke-width="1.500"/></svg>Start Video</button>
  </div>
  <div class="cmid">
    <button class="ctl"><svg width="24" height="24" viewBox="0 0 24 24"><g fill="currentColor"><circle cx="7.500" cy="7" r="4"/><path d="M0 19q0-6 7.500-6t7.500 6q0 2-2 2H2q-2 0-2-2z"/><circle cx="17.500" cy="8.500" r="3.800"/><path d="M15 14q9-1.500 9 5 0 2-2 2h-6.500q1-1 1-3t-1.500-4z"/></g></svg>Participants<sup>40</sup></button>
    <button class="ctl share"><svg width="24" height="24" viewBox="0 0 24 24"><rect y="3" width="24" height="18" rx="3" fill="currentColor"/><path d="M12 16.500V8.500M8.500 11.500L12 8l3.500 3.500" fill="none" stroke="#041" stroke-width="1.700"/></svg>Share Screen</button>
    <button class="ctl chat"><svg width="24" height="24" viewBox="0 0 24 24"><path d="M3 3h15q2 0 2 2v9q0 2-2 2h-8.500L5 21.500V16H3q-2 0-2-2V5q0-2 2-2z" fill="currentColor"/></svg>Chat<b>6</b></button>
    <button class="chev" aria-label="Chat options"><svg width="10" height="10"><use href="#up"/></svg></button>
    <button class="ctl cc"><svg width="24" height="24" viewBox="0 0 24 24"><rect y="3" width="24" height="18" rx="2" fill="currentColor"/><path d="M11 10a2.800 2.800 0 1 0 0 4M19 10a2.800 2.800 0 1 0 0 4" fill="none" stroke="#000" stroke-width="1.700"/></svg>Show Captions</button>
    <button class="chev" aria-label="Caption options"><svg width="10" height="10"><use href="#up"/></svg></button>
    <button class="ctl react"><svg width="24" height="24" viewBox="0 0 24 24"><circle cx="12" cy="12" r="9" fill="currentColor"/><path d="M16 0h8v8h-5l-3-3z" fill="#000"/><path d="M20 0v7M16.500 3.500h7" stroke="currentColor" stroke-width="1.400"/><circle cx="9" cy="10.500" r="1.300" fill="#000"/><circle cx="15" cy="10.500" r="1.300" fill="#000"/><path d="M8 14q4 4 8 0" stroke="#000" stroke-width="1.500" fill="none"/></svg>Reactions</button>
    <button class="ctl sett"><svg width="24" height="24" viewBox="0 0 24 24"><circle cx="12" cy="12" r="6" fill="none" stroke="currentColor" stroke-width="4.500"/><path d="M12 2.500v4M12 17.500v4M3.800 7.200l3.500 2M16.700 14.800l3.500 2M3.800 16.800l3.500-2M16.700 9.200l3.500-2" stroke="currentColor" stroke-width="5"/></svg>Settings</button>
    <button class="ctl more"><svg width="24" height="24" viewBox="0 0 24 24"><g fill="currentColor"><circle cx="4" cy="12" r="2"/><circle cx="12" cy="12" r="2"/><circle cx="20" cy="12" r="2"/></g></svg>More</button>
  </div>
  <div class="cright"><button class="leave">Leave</button></div>
</footer>

<footer class="taskbar">
  <button class="start" aria-label="Menu"><svg width="34" height="34" viewBox="0 0 34 34"><g fill="none" stroke="#e4e4e4"><circle cx="17" cy="17" r="15" stroke-width="2"/><path d="M9 9v11q0 4 4 4h8q4 0 4-4v-4.500a3 3 0 0 0-5.500-1.500q-.5.700-.5 1.500V20M19 15.500a2.800 2.800 0 0 0-5.500 0V20" stroke-width="2.400"/></g></svg></button>
  <i class="sep"></i>
  <button class="app run" aria-label="Files"><svg width="30" height="30" viewBox="0 0 30 30"><path d="M1 3q0-1 1-1h10l3 3h13q1 0 1 1v5H1z" fill="#dba450"/><path d="M3 7h24v4H3z" fill="#eee"/><path d="M1 9h28v17q0 1-1 1H2q-1 0-1-1z" fill="#f7c36f"/></svg></button>
  <button class="app" aria-label="Terminal"><svg width="30" height="30" viewBox="0 0 30 30"><rect x=".5" y=".5" width="29" height="29" rx="5" fill="#292929" stroke="#111"/><path d="M1.500 5q0-3.500 4-3.500h19q4 0 4 3.500" fill="none" stroke="#555"/><path d="M8 5.500q-3-1-3 .8 0 1 1.500 1.200Q8.200 8 7.900 9 7 10.300 4.700 9.500M6.500 3.500v7M10.500 11h6" fill="none" stroke="#fff" stroke-width="1.300"/></svg></button>
  <button class="app run on" aria-label="Brave"><svg width="30" height="30" viewBox="0 0 30 30"><defs><linearGradient id="bg" x2="0" y2="1"><stop stop-color="#f9a035"/><stop offset="1" stop-color="#fc5a33"/></linearGradient></defs><rect x="1" y="1" width="28" height="28" rx="5" fill="url(#bg)"/><svg x="5" y="5" width="20" height="20"><use href="#lion"/></svg></svg></button>
  <button class="app" aria-label="System monitor"><svg width="30" height="30" viewBox="0 0 30 30"><rect x=".5" y=".5" width="29" height="29" rx="5" fill="#2c3a28" stroke="#161a15"/><path d="M2 17h5l2-10 2 16 2-10 1.500 4 1.500-3 1.500 3H28" fill="none" stroke="#2fd53a" stroke-width="1.200"/></svg></button>
  <button class="app run" aria-label="VS Code"><svg width="30" height="30" viewBox="0 0 30 30"><path d="M21 1l8 3.500v21L21 29 1.500 11.500 4.500 9 21 21.500z" fill="#0879c4"/><path d="M21 1L1.500 18.500l3 2.500L21 8.500z" fill="#139be5"/><path d="M21 1l8 3.500v21L21 29z" fill="#29a9f2"/></svg></button>
  <div class="tray">
    <svg width="14" height="17" viewBox="0 0 14 17"><path d="M1 3.500h12v12H1z" fill="none" stroke="#eee" stroke-width="1.800"/><path d="M4 5V3h1.500q1.500-3 3 0H10v2z" fill="#eee"/><path d="M7 6.500v4M7 11.500v2" stroke="#eee" stroke-width="1.800"/></svg>
    <svg width="17" height="17" viewBox="0 0 17 17"><path d="M8 1q3 2 6.500 2 .5 9-6.500 13Q1 12 1.500 3 5 3 8 1z" fill="#333" stroke="#eee" stroke-width="1.400"/><path d="M8 3.500v10Q3.500 11 4 5q2 0 4-1.500z" fill="#ddd"/><circle cx="13.500" cy="13.500" r="3" fill="#e0703a"/></svg>
    <svg width="16" height="16" viewBox="0 0 16 16"><path d="M5.500 1h5v5h-5zM0 11h5v5H0zM11 11h5v5h-5z" fill="#eee"/><path d="M8 6v3M2.500 11V8.500h11V11" fill="none" stroke="#eee" stroke-width="1.200"/></svg>
    <svg width="14" height="15" viewBox="0 0 14 15"><path d="M4 12V1.500h9V10" fill="none" stroke="#eee" stroke-width="1.300"/><path d="M4 1h9v3H4z" fill="#eee"/><circle cx="2.500" cy="12.500" r="2.200" fill="#eee"/><circle cx="11.500" cy="10.500" r="2.200" fill="#eee"/></svg>
    <svg width="16" height="16" viewBox="0 0 16 16"><circle cx="8" cy="8" r="4" fill="#eee"/><path d="M8 0v2.500M8 13.500V16M0 8h2.500M13.500 8H16M2.300 2.300l1.700 1.700M12 12l1.700 1.700M2.300 13.700L4 12M12 4l1.700-1.700" stroke="#eee" stroke-width="1.700"/></svg>
    <time>21:44</time>
    <i class="desk"></i>
  </div>
</footer>
</body>
</html>
```
FILE: styles.css
```css
* { box-sizing: border-box; }
body { margin: 0; height: 100vh; display: flex; flex-direction: column; background: #000; font-family: "Noto Sans", sans-serif; overflow: hidden; }
button { border: 0; padding: 0; margin: 0; background: none; color: inherit; font: inherit; display: flex; align-items: center; justify-content: center; }
a { color: inherit; text-decoration: none; }
svg { flex: none; display: block; }
.defs { position: absolute; width: 0; height: 0; }
.white { color: #fff; }

/* browser tabs */
.tabs { height: 40px; display: flex; align-items: center; color: #b6b6b6; font: 13px "DejaVu Sans", sans-serif; }
.pinned { width: 39px; }
.tablist { flex: 1; display: flex; height: 32px; }
.tab { flex: none; width: calc(100% / 6); display: flex; align-items: center; gap: 8px; padding: 0 8px 0 10px; height: 24px; margin: 4px 0; border-right: 1px solid #555; }
.tab span { flex: 1; min-width: 0; overflow: hidden; white-space: nowrap; mask-image: linear-gradient(90deg, #000 86%, transparent); }
.tab:first-child span { mask-image: none; }
.tab:nth-child(4) { border-color: transparent; }
.tab.current { width: calc(100% / 6 - 4px); margin: 0 3px 0 1px; height: 32px; background: #fff; color: #222; border: 0; border-radius: 8px; gap: 7px; padding: 0 9px 0 11px; }
.tab.current span { margin-left: -2px; }
.tabx { color: #111; }
.winctl { display: flex; width: 219px; padding: 0 12px 0 14px; justify-content: space-between; }
.winctl .tabmenu { margin-left: 46px; margin-right: 6px; }

/* address bar */
.toolbar { height: 41px; display: flex; align-items: center; background: #fff; border-bottom: 1px solid #ccc; color: #5c5c5c; }
.navbtns { width: 246px; display: flex; gap: 18px; padding: 0 16px 0 15px; align-items: center; }
.navbtns .off { color: #bbb; }
.navbtns .mark { margin-left: auto; }
.omnibox { flex: 1; min-width: 0; height: 32px; border-radius: 8px; background: #e0e0e0; display: flex; align-items: center; gap: 18px; padding: 0 6px 0 11px; }
.url { flex: 1; min-width: 0; margin: 0 -6px 0 -4px; overflow: hidden; text-overflow: ellipsis; white-space: nowrap; color: #2c2c2c; font: 14px "DejaVu Sans", sans-serif; }
.url span { color: #6b6b6b; }
.vline { width: 1px; height: 16px; background: #aaa; margin: 0 -6px 0 -8px; }
.rewards { position: relative; }
.rewards b { position: absolute; top: -5px; right: -4px; width: 12px; height: 12px; border-radius: 6px; background: #f4502c; color: #fff; font: 9px/12px "DejaVu Sans", sans-serif; text-align: center; }
.exts { width: 246px; display: flex; justify-content: flex-end; gap: 18px; padding-right: 15px; }

/* meeting area */
.meeting { flex: 1; min-height: 0; position: relative; display: flex; padding: 0 74px; background: #0d100f; }
.shared { flex: 1; min-width: 0; border: 3px solid #48c400; background: #fafafd; display: flex; flex-direction: column; overflow: hidden; color: #3c4043; font: 7px/9px Inter, sans-serif; }
.macbar { height: 10px; flex: none; display: flex; align-items: center; gap: 9px; padding: 0 7px 4px; background: linear-gradient(90deg, #3d1905, #7d3a0c 50%, #85400f); color: #a8663c; }
.macright { margin-left: auto; display: flex; gap: 15px; align-items: center; }
.batt { display: inline-block; width: 11px; height: 5px; background: currentColor; border-radius: 1px; }
.mactabs { height: 20px; flex: none; display: flex; background: #000; color: #ccc; padding-left: 44px; align-items: flex-end; font: 500 7px/10px Roboto, sans-serif; }
.mactab { width: 120px; height: 18px; display: flex; align-items: center; gap: 4px; padding: 0 6px 1px; }
.mactab span { flex: 1; overflow: hidden; white-space: nowrap; mask-image: linear-gradient(90deg, #000 88%, transparent); }
.mactab.on { background: #36373a; border-radius: 5px 5px 0 0; color: #fff; }
.mtdown { width: 14px; height: 14px; border-radius: 4px; background: #36373a; margin: 0 0 3px auto; }
.macaddr { height: 21px; flex: none; display: flex; align-items: center; background: #343437; gap: 11px; padding: 0 5px; color: #9b9b9f; }
.macurl { flex: 1; min-width: 0; height: 17px; display: flex; align-items: center; gap: 8px; border-radius: 9px; background: #1f1f22; padding: 0 8px 0 1px; color: #9b9b9f; }
.macurl div { flex: 1; white-space: nowrap; overflow: hidden; margin-left: -5px; }
.macurl b { color: #fff; font-weight: 600; }
.macurl > svg { color: #ccc; }
.macurl i { width: 13px; height: 13px; border-radius: 7px; background: #343437; display: grid; place-items: center; }
.macext { width: 178px; display: flex; justify-content: space-between; align-items: center; }
.marks { height: 20px; flex: none; display: flex; align-items: center; gap: 8px; padding: 0 6px 1px 4px; background: #343437; border-bottom: 1px solid #666; color: #9a9a9e; white-space: nowrap; font-size: 6px; }
.marks span { display: flex; align-items: center; gap: 4px; }
.marks .allmarks { margin-left: auto; }

/* document header */
.dochead { height: 35px; flex: none; display: flex; align-items: center; padding: 0 10px 0 9px; }
.doctitle { margin-left: 7px; }
.docname { display: flex; align-items: center; gap: 8px; }
.docname h1 { margin: 0 3px 0 0; font: 500 10px/14px Roboto, sans-serif; color: #1f1f1f; }
.doctitle nav { display: flex; gap: 10px; font: 500 7px/14px Inter, sans-serif; }
.people { margin: 0 186px 0 auto; padding-bottom: 3px; display: flex; align-items: center; gap: 4px; }
.people > svg { margin: 0 11px 0 7px; }
.av { width: 18px; height: 18px; border-radius: 9px; display: grid; place-items: center; color: #ddd; font-size: 9px; }
.av1 { background: #69219c; border: 1px solid #a03070; }
.av2 { background: #7b35dc; }
.av3 { background: #d3dffb; }
.cam { display: flex; align-items: center; gap: 6px; margin-left: 4px; }
.caret { border: 2px solid transparent; border-top: 3px solid currentColor; border-bottom: 0; }
.doctools { height: 23px; flex: none; margin-left: 6px; padding: 0 4px; display: flex; align-items: center; gap: 6px; background: #ebf0f9; border-radius: 12px 0 0 12px; }
.menus { width: 56px; height: 16px; gap: 6px; background: #fff; border-radius: 8px; }
.tvline { width: 1px; height: 11px; background: #bbc; }
.fit { width: 36px; justify-content: space-between; }
.pointer { width: 17px; height: 16px; background: #d0dcf9; border-radius: 2px; }
.viewonly { width: 70px; height: 16px; gap: 6px; margin-left: -1px; background: #d0dcf9; border-radius: 8px; color: #1a2b50; font-weight: 500; }

/* filmstrip and slide */
.editor { flex: 1; min-height: 0; display: flex; }
.film { width: 110px; display: flex; flex-direction: column; padding-top: 4px; }
.thumbs { flex: 1; margin: 0; padding: 0 4px 0 0; list-style: none; display: flex; flex-direction: column; justify-content: space-between; }
.thumbs li { display: flex; height: 50px; gap: 6px; }
.thumbs li > span { width: 14px; text-align: right; font: 500 7px/12px Inter, sans-serif; }
.thumb { width: 86px; height: 50px; border: 1px solid #c5c5cb; border-radius: 7px; background: #fef9f9; overflow: hidden; }
.thumbs .cut, .cut .thumb { height: 36px; }
.cut .thumb { border-top: 0; border-radius: 0 0 7px 7px; }
.active .thumb { border: 2px solid #2b57b8; }
.thumb svg { width: 100%; height: 100%; }
.thumb text { font: 3px Inter, sans-serif; fill: #555; }
.thumb .light { fill: #dde; }
.ln { stroke: #aaa; stroke-width: 1; stroke-dasharray: 4 .5 2 .5; opacity: .8; }
.ln.g { stroke: #88bf9f; }
.ln.d { stroke: #777; }
.code { fill: #222b33; stroke: #a0abb8; stroke-width: 1.5; }
.lights { stroke: #d2813a; stroke-width: 1; stroke-dasharray: 1 1; }
.cl { stroke: #61707b; stroke-width: .6; stroke-dasharray: 3 .7 1 .7; }
.filmfoot { height: 41px; flex: none; display: flex; align-items: center; gap: 19px; padding: 5px 13px 0; }
.scroll { width: 18px; padding: 408px 0 40px 2px; display: flex; }
.scroll i { width: 5px; border-radius: 3px; background: #d9d9dd; }
.stage { flex: 1; min-width: 0; position: relative; display: flex; flex-direction: column; padding: 13px 6px 6px 0; }
.slide { flex: 1; position: relative; margin: 0 110px 0 113px; background: #fef9f8; border: 1px solid #dedede; border-left: 0; border-bottom-color: #cfc9c9; padding: 31px 0 0 40px; overflow: hidden; color: #1b3049; }
.slide h2 { margin: 0; font: 400 33px/40px Lato, sans-serif; color: #23504a; }
.slide ul { margin: 0; padding: 0; list-style: none; font: 18px/22px Inter, sans-serif; font-feature-settings: "cv11", "calt" 0; }
.slide > ul { margin-top: 32px; padding-left: 47px; }
.slide ul ul { padding-left: 46px; font-size: 15px; line-height: 20px; }
.slide li { position: relative; }
.slide li::before { content: ""; position: absolute; left: -33px; top: 8px; width: 8px; height: 8px; border-radius: 4px; background: #1b3049; }
.slide li li::before { left: -31px; top: 7px; width: 7px; height: 7px; background: none; border: 1px solid #7d8792; }
.pillar { position: absolute; right: 0; bottom: 0; width: 74px; height: 152px; border-radius: 37px 37px 0 0; background: #68c59b; }
.ring { position: absolute; right: 44px; bottom: 7px; width: 59px; height: 59px; border-radius: 30px; border: 3px solid #f0b3b7; }
.grip { height: 22px; display: flex; align-items: center; justify-content: center; }
.grip i { width: 27px; height: 1px; background: #777; }
.notes { height: 27px; border-radius: 4px; background: #ebf0f9; }
.expand { position: absolute; right: -8px; bottom: 3px; width: 20px; height: 20px; border-radius: 10px; background: #fff; box-shadow: 0 0 2px #999; padding-right: 4px; }

/* overlays */
.badges { position: absolute; left: 20px; top: 17px; display: flex; gap: 4px; }
.badges > * { height: 22px; border-radius: 6px; background: #1a1c1b; display: flex; align-items: center; justify-content: center; }
.badges .shield { width: 16px; height: 20px; }
.rec { width: 54px; gap: 4px; padding-right: 8px; color: #aaa; font: 600 10px Inter, sans-serif; }
.rec i { width: 6px; height: 6px; border-radius: 3px; background: #e23b35; }
.gridbtn { width: 22px; }
.banner { position: absolute; left: 484px; top: 1px; display: flex; align-items: flex-start; }
.viewing { height: 23px; width: 347px; background: #1fae49; color: #ddf0dc; font-size: 15px; line-height: 22px; padding: 0 0 2px 10px; display: flex; align-items: center; white-space: nowrap; }
.bmic { margin: 0 8px 0 3px; }
.options { height: 22px; width: 125px; padding-bottom: 1px; background: #1c1e1f; color: #eee; font-size: 15px; gap: 6px; border-radius: 0 0 4px 0; }
.full { position: absolute; right: 10px; top: 12px; width: 32px; height: 32px; background: #050606; border-radius: 4px; }
.speaker { position: absolute; right: 0; top: 44px; width: 264px; height: 177px; padding: 30px 2px 4px; border-radius: 8px; background: linear-gradient(rgba(5,5,5,.94) 30px, #2a2b2c 30px); display: flex; }
.speakerbody { flex: 1; position: relative; display: grid; place-items: center; padding-bottom: 2px; background: #141517; color: #eee; border-radius: 0 0 6px 6px; }
.speakerbody strong { font-size: 17px; font-weight: 700; }
.speakerbody span { position: absolute; left: 2px; bottom: 0; padding: 0 5px 0 4px; background: #0b0c0d; font-size: 12px; line-height: 22px; }

/* meeting controls */
.controls { height: 51px; flex: none; display: flex; color: #989898; font-size: 12px; }
.cleft { flex: 472 1 0; display: flex; padding-left: 22px; }
.cright { flex: 391 1 0; display: flex; justify-content: flex-end; align-items: center; padding-right: 16px; }
.cmid { display: flex; }
.ctl { position: relative; flex-direction: column; justify-content: flex-start; padding-top: 4px; gap: 3px; line-height: 16px; white-space: nowrap; }
.ctl.dim { color: #7f7f7f; }
.ctl.dim svg { color: #999; }
.chev { width: 20px; height: 32px; color: #999; }
.cleft .chev { margin-left: 2px; }
.video { margin-left: 14px; }
.share { color: #3fe070; margin-left: 24px; }
.chat { margin-left: 39px; }
.cmid .chev { margin-left: 6px; }
.cc { margin-left: 12px; }
.cmid .cc + .chev { margin-left: -8px; }
.react { margin-left: 13px; }
.sett { margin-left: 30px; }
.more { margin-left: 42px; }
.ctl sup { position: absolute; left: 45px; top: 4px; font-size: 11px; }
.ctl b { position: absolute; right: -2px; top: 3px; width: 13px; height: 12px; border-radius: 3px; background: #b01c1c; color: #eee; font: 10px/12px "Noto Sans", sans-serif; box-shadow: 0 0 0 1px #222; }
.leave { width: 70px; height: 28px; border-radius: 8px; background: #b01c1c; color: #f3e6e6; font-size: 13px; font-weight: 700; }

/* desktop panel */
.taskbar { height: 41px; flex: none; display: flex; align-items: center; background: #2e2e2e; border-top: 1px solid #3a3a3a; padding-left: 4px; }
.sep { width: 1px; height: 38px; background: #484848; margin: 0 8px 0 12px; }
.app { width: 38px; height: 40px; margin-right: 2px; padding-bottom: 2px; border-bottom: 2px solid transparent; }
.app.run { border-color: #1f9ede; }
.app.on { background: #555; }
.tray { margin-left: auto; display: flex; align-items: center; gap: 10px; height: 100%; padding-right: 4px; }
.tray time { color: #eee; font: 700 13px "DejaVu Sans", sans-serif; }
.desk { width: 8px; height: 32px; background: #484848; margin-left: -2px; }
```
